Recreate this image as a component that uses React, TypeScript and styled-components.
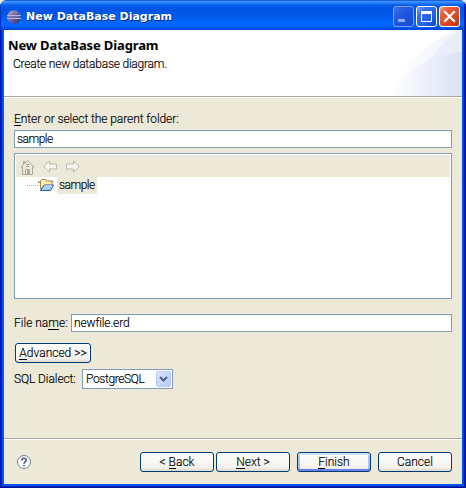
import React from "react";
import styled, { createGlobalStyle, css } from "styled-components";

const Global = createGlobalStyle`
  * { box-sizing: border-box; }
  html, body { margin: 0; padding: 0; overflow: hidden; background: #ece9d8; }
`;

const Dialog = styled.div`
  width: 466px;
  height: 488px;
  display: flex;
  flex-direction: column;
  border-radius: 7px 7px 0 0;
  overflow: hidden;
  background: #0046e0;
  font: 12px/16px Roboto, "Noto Sans", sans-serif;
  color: #000;
`;

const TitleBar = styled.div`
  height: 30px;
  flex: none;
  display: flex;
  align-items: center;
  padding: 3px 6px 0 7px;
  background: linear-gradient(180deg, #0a48c8 0, #3c90ff 1.5px, #2a80fa 3px, #0560ec 5px, #0054e3 9px, #0057e8 15px, #0066fc 22px, #0066ff 26px, #0054ea 28px, #0040d0 30px);
  box-shadow: inset 1px 0 0 #0831c0, inset -1px 0 0 #00138c, inset -2px 0 0 #0030c8;
`;

const Title = styled.div`
  flex: 1;
  margin-left: 5px;
  font: bold 11px/16px "DejaVu Sans", sans-serif;
  color: #fff;
  text-shadow: 1px 1px 0 #0a2a8c;
  white-space: nowrap;
`;

const WindowButtons = styled.div`
  display: flex;
  gap: 2px;
`;

const WindowButton = styled.div<{ $kind: "min" | "max" | "close" }>`
  width: 21px;
  height: 21px;
  border-radius: 3px;
  border: 1px solid ${(p) => (p.$kind === "min" ? "#7c9ff2" : "#fff")};
  background: ${(p) =>
    p.$kind === "close"
      ? "linear-gradient(135deg, #f0a088 0, #e4603c 25%, #dc4820 65%, #b83410 100%)"
      : p.$kind === "max"
        ? "linear-gradient(135deg, #7fa6f8 0, #3a72ee 25%, #2260e8 65%, #1048c8 100%)"
        : "linear-gradient(135deg, #3d70ea 0, #2258e2 40%, #1648d4 100%)"};
  svg { display: block; }
`;

const Frame = styled.div`
  flex: 1;
  display: flex;
  flex-direction: column;
  padding: 0 4px 4px;
  background: #ece9d8;
  box-shadow: inset 1px 0 0 #0014b4, inset -1px -1px 0 #00108c, inset 2px -2px 0 #0026cc, inset -2px 0 0 #0022b8,
    inset 3px -3px 0 #0050ee, inset -3px 0 0 #0046e0, inset 4px -4px 0 #0a5cf4, inset -4px 0 0 #0050f0;
`;

const Banner = styled.div`
  height: 66px;
  display: flex;
  justify-content: space-between;
  background: #fff;
`;

const BannerText = styled.div`
  padding: 7px 0 0 4px;
`;

const Heading = styled.div`
  font: bold 13px/16px "Noto Sans", sans-serif;
  letter-spacing: -0.12px;
  white-space: nowrap;
`;

const SubHeading = styled.div`
  padding: 3px 0 0 5px;
`;

const Etched = styled.div`
  height: 2px;
  flex: none;
  border-top: 1px solid #aca899;
  border-bottom: 1px solid #fff;
`;

const Body = styled.div`
  height: 340px;
  padding: 13px 10px 0;
`;

const Text = styled.span<{ $ls?: number }>`
  white-space: pre;
  font-weight: 300;
  -webkit-text-stroke: 0.15px #000;
  letter-spacing: ${(p) => p.$ls ?? 0}px;
`;

const Key = styled.span`
  border-bottom: 1px solid #000;
  display: inline-block;
  line-height: 12px;
`;

const fieldBox = css`
  border: 1px solid #7f9db9;
  background: #fff;
`;

const Field = styled.div`
  ${fieldBox}
  flex: 1;
  height: 18px;
  padding: 0 2px;
`;

const LabelRow = styled.div`
  height: 19px;
  line-height: 16px;
`;

const Row = styled.div<{ $top: number; $height: number }>`
  display: flex;
  align-items: center;
  margin-top: ${(p) => p.$top}px;
  height: ${(p) => p.$height}px;
`;

const FieldLabel = styled.div<{ $width: number }>`
  width: ${(p) => p.$width}px;
  flex: none;
`;

const Tree = styled.div`
  ${fieldBox}
  height: 146px;
  margin-top: 5px;
  padding: 1px;
`;

const TreeToolbar = styled.div`
  height: 22px;
  background: #ece9d8;
  svg { display: block; }
`;

const TreeRow = styled.div`
  display: flex;
  height: 17px;
  padding-left: 11px;
`;

const TreeLine = styled.div`
  width: 11px;
  height: 1px;
  margin-top: 8px;
  background: repeating-linear-gradient(90deg, #aca899 0 1px, #fff 1px 2px);
`;

const Selected = styled.div`
  width: 40px;
  margin-left: 3px;
  padding-left: 2px;
  background: #ece9d8;
`;

const Button = styled.div<{ $width: number; $default?: boolean }>`
  width: ${(p) => p.$width}px;
  height: 20px;
  flex: none;
  display: flex;
  align-items: center;
  justify-content: center;
  border: 1px solid #003c74;
  border-radius: 3px;
  background: linear-gradient(#fff, #f3f2ec 80%, #dcd8cc);
  ${(p) => p.$default && css`
    box-shadow: inset 0 2px 0 #cee0fc, inset 0 -2px 0 #6982ee, inset 2px 0 0 #a9c2f5, inset -2px 0 0 #a9c2f5;
  `}
`;

const Select = styled.div`
  ${fieldBox}
  width: 91px;
  height: 20px;
  display: flex;
  align-items: center;
  justify-content: space-between;
  padding: 0 1px 0 3px;
`;

const Drop = styled.div`
  width: 15px;
  height: 16px;
  flex: none;
  border-radius: 2px;
  border: 1px solid #b7caf7;
  background: linear-gradient(135deg, #dbe6ff, #b6cbfa);
  svg { display: block; }
`;

const Footer = styled.div`
  flex: 1;
  display: flex;
  align-items: flex-start;
  padding: 12px 10px 0 12px;
`;

const Help = styled.div`
  width: 16px;
  height: 20px;
  margin: 2px auto 0 0;
`;

const Buttons = styled.div`
  display: flex;
  gap: 7px;
`;

const Pair = styled.div`
  display: flex;
  gap: 2px;
`;

const EclipseLogo = () => (
  <svg width="14" height="14" viewBox="0 0 14 14">
    <defs>
      <linearGradient id="ball" x1="0" y1="0" x2="1" y2="1">
        <stop offset="0" stopColor="#c8b0d0" />
        <stop offset=".5" stopColor="#6c64a4" />
        <stop offset="1" stopColor="#2b2668" />
      </linearGradient>
    </defs>
    <circle cx="7" cy="7" r="6.8" fill="url(#ball)" />
    <path d="M0 5.5h14M0 8.5h14" stroke="#b4b4dc" />
    <path d="M1 7h12" stroke="#7774ae" />
  </svg>
);

const BannerArt = () => (
  <svg width="76" height="66" viewBox="0 0 76 66">
    <defs>
      <linearGradient id="wash" x1="0" x2="1" y1="0" y2="0">
        <stop offset="0" stopColor="#fff" />
        <stop offset=".4" stopColor="#f9fafe" />
        <stop offset="1" stopColor="#eef2fb" />
      </linearGradient>
      <linearGradient id="wash2" x1="0" x2="1" y1="0" y2="0">
        <stop offset="0" stopColor="#fefeff" />
        <stop offset=".4" stopColor="#f0f3fb" />
        <stop offset="1" stopColor="#dbe1f5" />
      </linearGradient>
    </defs>
    <path d="M4 66C18 34 46 6 76 0V66Z" fill="url(#wash)" />
    <path d="M28 66C36 36 54 10 76 1V66Z" fill="#e3eaf8" opacity=".6" />
    <path d="M4 66C18 42 45 24 76 22V66Z" fill="url(#wash2)" />
  </svg>
);

const TreeIcons = () => (
  <svg width="80" height="22" viewBox="0 0 80 22">
    <g fill="none" stroke="#aca899">
      <path d="M4.5 12.5 11.5 5.5l7 7M6.5 11.5v8h10v-8M7.5 9V6.500h1v2" />
      <path d="M13.5 19v-4.500h-4V19M10 9.500h3M10 11.500h3" />
      <path d="M12 14v5.500" strokeWidth="2" />
    </g>
    <g fill="#f6f5f0" stroke="#bbb8ac" strokeLinejoin="round">
      <path d="M27.500 11.500l6-5.500v3h7v5h-7v3z" />
      <path d="M63.500 11.500l-6-5.500v3h-7v5h7v3z" />
    </g>
  </svg>
);

const FolderIcon = () => (
  <svg width="16" height="16" viewBox="0 0 16 16">
    <path d="M2.5 12.5v-9l1-1h4l1 1.500h5.500v6" fill="#fff0b8" stroke="#bb8433" />
    <path d="M.5 4v1.500h2M14 4.500h1.500" fill="none" stroke="#8b7f8d" />
    <path d="M2.500 13.500l3.500-5.500h9.500l-3 5.500z" fill="#9fccf8" stroke="#3558b0" strokeLinejoin="round" />
    <path d="M6.500 9h7.500" stroke="#e0f2ff" />
  </svg>
);

export default function App() {
  return (
    <>
      <Global />
      <Dialog>
        <TitleBar>
          <EclipseLogo />
          <Title>New DataBase Diagram</Title>
          <WindowButtons>
            <WindowButton $kind="min">
              <svg width="19" height="19"><path d="M4 12h7v3H4z" fill="#90aaf3" /></svg>
            </WindowButton>
            <WindowButton $kind="max">
              <svg width="19" height="19"><path d="M4.500 5.500h10v9h-10z" fill="none" stroke="#fff" /><path d="M4 4h11v3H4z" fill="#fff" /></svg>
            </WindowButton>
            <WindowButton $kind="close">
              <svg width="19" height="19"><path d="M5 5l9 9M14 5l-9 9" stroke="#fff" strokeWidth="2.200" strokeLinecap="square" /></svg>
            </WindowButton>
          </WindowButtons>
        </TitleBar>
        <Frame>
          <Banner>
            <BannerText>
              <Heading>New DataBase Diagram</Heading>
              <SubHeading><Text $ls={-0.22}>Create new database diagram.</Text></SubHeading>
            </BannerText>
            <BannerArt />
          </Banner>
          <Etched />
          <Body>
            <LabelRow><Text $ls={-0.08}><Key>E</Key>nter or select the parent folder:</Text></LabelRow>
            <Field><Text $ls={-0.5}>sample</Text></Field>
            <Tree>
              <TreeToolbar><TreeIcons /></TreeToolbar>
              <TreeRow>
                <TreeLine />
                <FolderIcon />
                <Selected><Text $ls={-0.5}>sample</Text></Selected>
              </TreeRow>
            </Tree>
            <Row $top={15} $height={18}>
              <FieldLabel $width={57}><Text>File na<Key>m</Key>e:</Text></FieldLabel>
              <Field><Text $ls={-0.15}>newfile.erd</Text></Field>
            </Row>
            <Row $top={11} $height={20}>
              <FieldLabel $width={1} />
              <Button $width={76}><Text><Key>A</Key>dvanced &gt;&gt;</Text></Button>
            </Row>
            <Row $top={6} $height={20}>
              <FieldLabel $width={68}><Text $ls={-0.1}>SQL Dialect:</Text></FieldLabel>
              <Select>
                <Text $ls={-0.4}>PostgreSQL</Text>
                <Drop>
                  <svg width="13" height="14"><path d="M3 5l3.500 3.500L10 5" fill="none" stroke="#4d6185" strokeWidth="2.200" /></svg>
                </Drop>
              </Select>
            </Row>
          </Body>
          <Etched />
          <Footer>
            <Help>
              <svg width="16" height="16">
                <circle cx="8" cy="8" r="6.500" fill="#fff" stroke="#6f7f9f" />
                <path d="M5.800 6.500C5.800 3.500 10.300 3.500 10.300 6.200 10.300 7.800 8 7.800 8 9.800M8 10.800v1.500" fill="none" stroke="#465c88" strokeWidth="1.600" />
              </svg>
            </Help>
            <Buttons>
              <Pair>
                <Button $width={74}><Text>&lt; <Key>B</Key>ack</Text></Button>
                <Button $width={74}><Text><Key>N</Key>ext &gt;</Text></Button>
              </Pair>
              <Button $width={74} $default><Text><Key>F</Key>inish</Text></Button>
              <Button $width={74}><Text>Cancel</Text></Button>
            </Buttons>
          </Footer>
        </Frame>
      </Dialog>
    </>
  );
}
